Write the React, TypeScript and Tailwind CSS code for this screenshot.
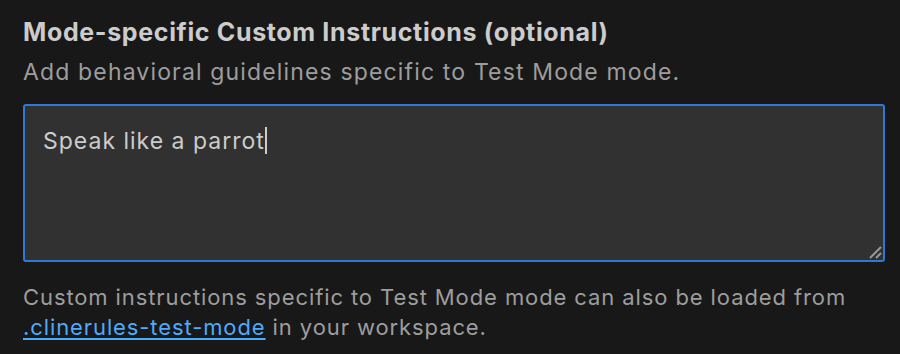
export default function App() {
  return (
    <div className="min-h-screen w-full bg-[#181818] px-[23px] pt-[17px] font-['Inter',sans-serif]">
      <div className="text-[25px] font-bold leading-[30px] tracking-[0.65px] text-[#cccccc]">
        Mode-specific Custom Instructions (optional)
      </div>
      <div className="mt-[10px] text-[23px] leading-[30px] tracking-[1.15px] text-[#9d9d9d]">
        Add behavioral guidelines specific to Test Mode mode.
      </div>

      {/* textarea look-alike */}
      <div className="relative mt-[17px] h-[158px] w-[862px] rounded-[3px] border-2 border-[#3079d2] bg-[#313131] px-[18px] pt-[16px] text-[23px] leading-[30px] tracking-[1px] text-[#cccccc]">
        <span>Speak like a parrot</span>
        <span className="inline-block h-[27px] w-[2px] translate-y-[5px] bg-[#cccccc]"></span>
        <svg className="absolute bottom-[1px] right-[1px] h-[14px] w-[14px]" viewBox="0 0 14 14">
          <path d="M13 2L2 13" stroke="#9a9a9a" strokeWidth={2} />
          <path d="M13 8L8 13" stroke="#9a9a9a" strokeWidth={2} />
        </svg>
      </div>

      <p className="mt-[20px] text-[22px] leading-[30px] tracking-[0.9px] text-[#9d9d9d]">
        Custom instructions specific to Test Mode mode can also be loaded from
        <br />
        <a className="text-[#4daafc] underline underline-offset-[3px]">.clinerules-test-mode</a> in your workspace.
      </p>
    </div>
  );
}
